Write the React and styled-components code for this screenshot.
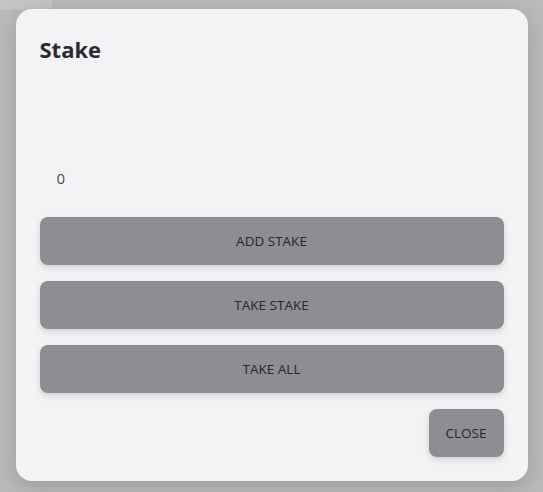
import React, { useState } from "react";
import styled, { createGlobalStyle } from "styled-components";

const GlobalStyle = createGlobalStyle`
  html, body {
    margin: 0;
    padding: 0;
    height: 100%;
  }
  body {
    font-family: "Open Sans", "Noto Sans", sans-serif;
    background: #bcbcbf;
  }
`;

const Backdrop = styled.div`
  position: relative;
  width: 543px;
  height: 492px;
  background: #bbbbbe;
  display: flex;
  justify-content: center;
  padding-top: 9px;
  box-sizing: border-box;
  overflow: hidden;
`;

const PageTab = styled.div`
  position: absolute;
  left: 0;
  top: 0;
  width: 52px;
  height: 10px;
  background: #c5c5c8;
`;

const Dialog = styled.div`
  position: relative;
  width: 512px;
  height: 472px;
  box-sizing: border-box;
  padding: 24px;
  background: #f3f3f5;
  border-radius: 16px;
  box-shadow: 0 6px 24px rgba(0, 0, 0, 0.18);
  display: flex;
  flex-direction: column;
`;

const Title = styled.h2`
  margin: 0;
  font-size: 22px;
  line-height: 32px;
  font-weight: 700;
  color: #2b2a31;
`;

const AmountInput = styled.input`
  margin-top: 93px;
  height: 40px;
  border: none;
  background: transparent;
  padding: 0 17px;
  font-family: inherit;
  font-size: 15px;
  color: #4a4a50;
  outline: none;
`;

const Actions = styled.div`
  margin-top: 19px;
  display: flex;
  flex-direction: column;
  gap: 16px;
`;

const Button = styled.button`
  height: 48px;
  width: ${(p) => (p.$compact ? "75px" : "100%")};
  align-self: ${(p) => (p.$compact ? "flex-end" : "stretch")};
  border: none;
  border-radius: 8px;
  background: #8e8d92;
  color: #28272e;
  font-family: inherit;
  font-size: 13.5px;
  text-transform: uppercase;
  box-shadow: 0 3px 6px rgba(0, 0, 0, 0.14);
  cursor: pointer;
`;

const App = () => {
  const [amount, setAmount] = useState("0");
  return (
    <>
      <GlobalStyle />
      <Backdrop>
        <PageTab />
        <Dialog>
          <Title>Stake</Title>
          <AmountInput
            value={amount}
            onChange={(e) => setAmount(e.target.value)}
          />
          <Actions>
            <Button>Add stake</Button>
            <Button>Take stake</Button>
            <Button>Take all</Button>
            <Button $compact>Close</Button>
          </Actions>
        </Dialog>
      </Backdrop>
    </>
  );
};

export default App;
